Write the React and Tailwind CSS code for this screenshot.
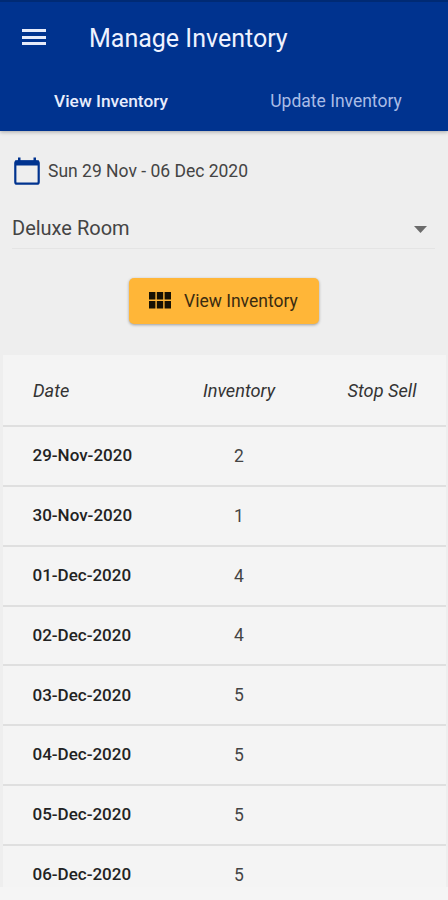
import React from 'react';

const rows = [
  { date: '29-Nov-2020', inventory: 2 },
  { date: '30-Nov-2020', inventory: 1 },
  { date: '01-Dec-2020', inventory: 4 },
  { date: '02-Dec-2020', inventory: 4 },
  { date: '03-Dec-2020', inventory: 5 },
  { date: '04-Dec-2020', inventory: 5 },
  { date: '05-Dec-2020', inventory: 5 },
  { date: '06-Dec-2020', inventory: 5 },
];

const Header = () => (
  <header className="relative z-10 h-[131px] bg-[#00338f] border-t-2 border-[#002a74] shadow-[0_1px_4px_rgba(0,0,0,0.3)]">
    <div className="flex items-center h-[70px] pl-[22px]">
      <button className="flex flex-col gap-[3.5px] w-6" aria-label="Menu">
        <span className="h-[3px] w-6 bg-[#e6ebfa]" />
        <span className="h-[3px] w-6 bg-[#e6ebfa]" />
        <span className="h-[3px] w-6 bg-[#e6ebfa]" />
      </button>
      <h1 className="ml-[43px] pt-[3px] text-[25px] text-[#eef2ff] whitespace-nowrap">Manage Inventory</h1>
    </div>
    <nav className="grid grid-cols-2 h-[57px] text-[17.5px] text-center leading-[58px]">
      <button className="pr-[2px] text-[17.3px] font-medium text-[#e8edfc]">View Inventory</button>
      <button className="text-[#a9bce6]">Update Inventory</button>
    </nav>
  </header>
);

const Filters = () => (
  <section className="h-[224px]">
    <div className="flex items-center h-[80px] pl-[14px] gap-2">
      {/* calendar */}
      <svg width="26" height="28" viewBox="0 0 26 28" fill="none">
        <rect x="1.3" y="4.3" width="23.4" height="22.4" rx="1.8" stroke="#00338f" strokeWidth="2.2" />
        <path d="M1 3.5h24v5H1zM4 0.5h2.5V5H4zM19.5 0.5H22V5h-2.5z" fill="#00338f" />
      </svg>
      <span className="pt-px text-[17.5px] text-[#444] whitespace-nowrap">Sun 29 Nov - 06 Dec 2020</span>
    </div>
    <div className="flex items-center justify-between h-[38px] ml-3 mr-[13px] pr-[8px] border-b border-[#e4e4e4]">
      <span className="pb-[3px] text-[20px] text-[#444]">Deluxe Room</span>
      <svg width="13" height="7" viewBox="0 0 13 7">
        <path d="M0 0h13L6.5 7z" fill="#6b6b6b" />
      </svg>
    </div>
    <button className="flex items-center mx-auto mt-[29px] h-[46px] w-[190px] pl-5 rounded-[5px] bg-[#ffb638] shadow-[0_1px_3px_rgba(0,0,0,0.35)]">
      <svg className="-mt-0.5" width="22" height="17" viewBox="0 0 22 17" fill="#171204">
        <path d="M0 0h6.4v7.6H0zM7.8 0h6.4v7.6H7.8zM15.6 0H22v7.6h-6.4zM0 9h6.4v7.6H0zM7.8 9h6.4v7.6H7.8zM15.6 9H22v7.6h-6.4z" />
      </svg>
      <span className="ml-[13px] text-[17.5px] text-[#3b2c10] whitespace-nowrap">View Inventory</span>
    </button>
  </section>
);

const InventoryTable = () => (
  <div className="ml-[3px] mr-[2px] bg-[#f4f4f4] text-[17.5px]">
    <div className="flex items-center h-[72px] pt-[2px] text-[18.2px] italic text-[#333] border-b-2 border-[#dfdfdf]">
      <span className="w-[157px] pl-[30px]">Date</span>
      <span className="w-[158px] text-center">Inventory</span>
      <span className="w-[128px] text-center">Stop Sell</span>
    </div>
    {rows.map((row) => (
      <div key={row.date} className="flex items-center h-[59.86px] border-b-2 border-[#dfdfdf]">
        <span className="w-[157px] pl-[29.5px] text-[17px] font-medium text-[#222]">{row.date}</span>
        <span className="w-[158px] text-center text-[#444]">{row.inventory}</span>
      </div>
    ))}
  </div>
);

const App = () => (
  <div className="flex flex-col w-[448px] h-[900px] overflow-hidden bg-[#eee] font-[Roboto,sans-serif]">
    <Header />
    <Filters />
    <div className="h-[532px] overflow-hidden shrink-0">
      <InventoryTable />
    </div>
    <div className="h-[13px] bg-[#f5f5f5]" />
  </div>
);

export default App;
